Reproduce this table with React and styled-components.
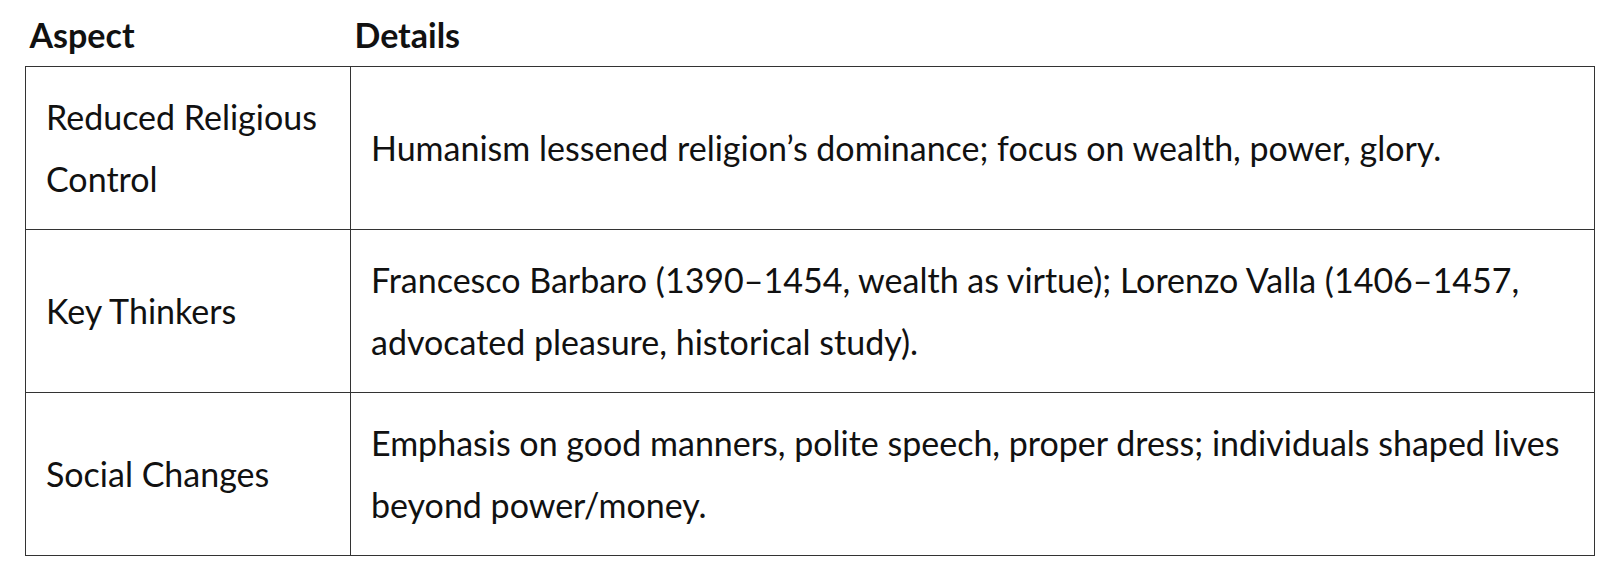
import React from "react";
import styled, { createGlobalStyle } from "styled-components";

const GlobalStyle = createGlobalStyle`
  body {
    margin: 0;
    background: #ffffff;
    font-family: Lato, "Noto Sans", sans-serif;
    color: #111111;
  }
`;

const Page = styled.div`
  padding: 4px 16px 0 25px;
`;

const Table = styled.table`
  border-collapse: collapse;
  width: 1570px;
  font-size: 34px;
  line-height: 62px;
`;

const HeadCell = styled.th`
  text-align: left;
  font-weight: 700;
  padding: 0 4px;
  height: 62px;
  vertical-align: middle;
  width: ${(props) => props.width || "auto"};
`;

const Cell = styled.td`
  border: 1.5px solid #333333;
  padding: 18px 20px;
  vertical-align: middle;
  height: 163px;
  box-sizing: border-box;
`;

const rows = [
  {
    aspect: "Reduced Religious Control",
    details:
      "Humanism lessened religion’s dominance; focus on wealth, power, glory.",
  },
  {
    aspect: "Key Thinkers",
    details:
      "Francesco Barbaro (1390–1454, wealth as virtue); Lorenzo Valla (1406–1457, advocated pleasure, historical study).",
  },
  {
    aspect: "Social Changes",
    details:
      "Emphasis on good manners, polite speech, proper dress; individuals shaped lives beyond power/money.",
  },
];

const App = () => {
  return (
    <Page>
      <GlobalStyle />
      <Table>
        <thead>
          <tr>
            <HeadCell width="317px">Aspect</HeadCell>
            <HeadCell>Details</HeadCell>
          </tr>
        </thead>
        <tbody>
          {rows.map((row) => (
            <tr key={row.aspect}>
              <Cell>{row.aspect}</Cell>
              <Cell>{row.details}</Cell>
            </tr>
          ))}
        </tbody>
      </Table>
    </Page>
  );
};

export default App;
